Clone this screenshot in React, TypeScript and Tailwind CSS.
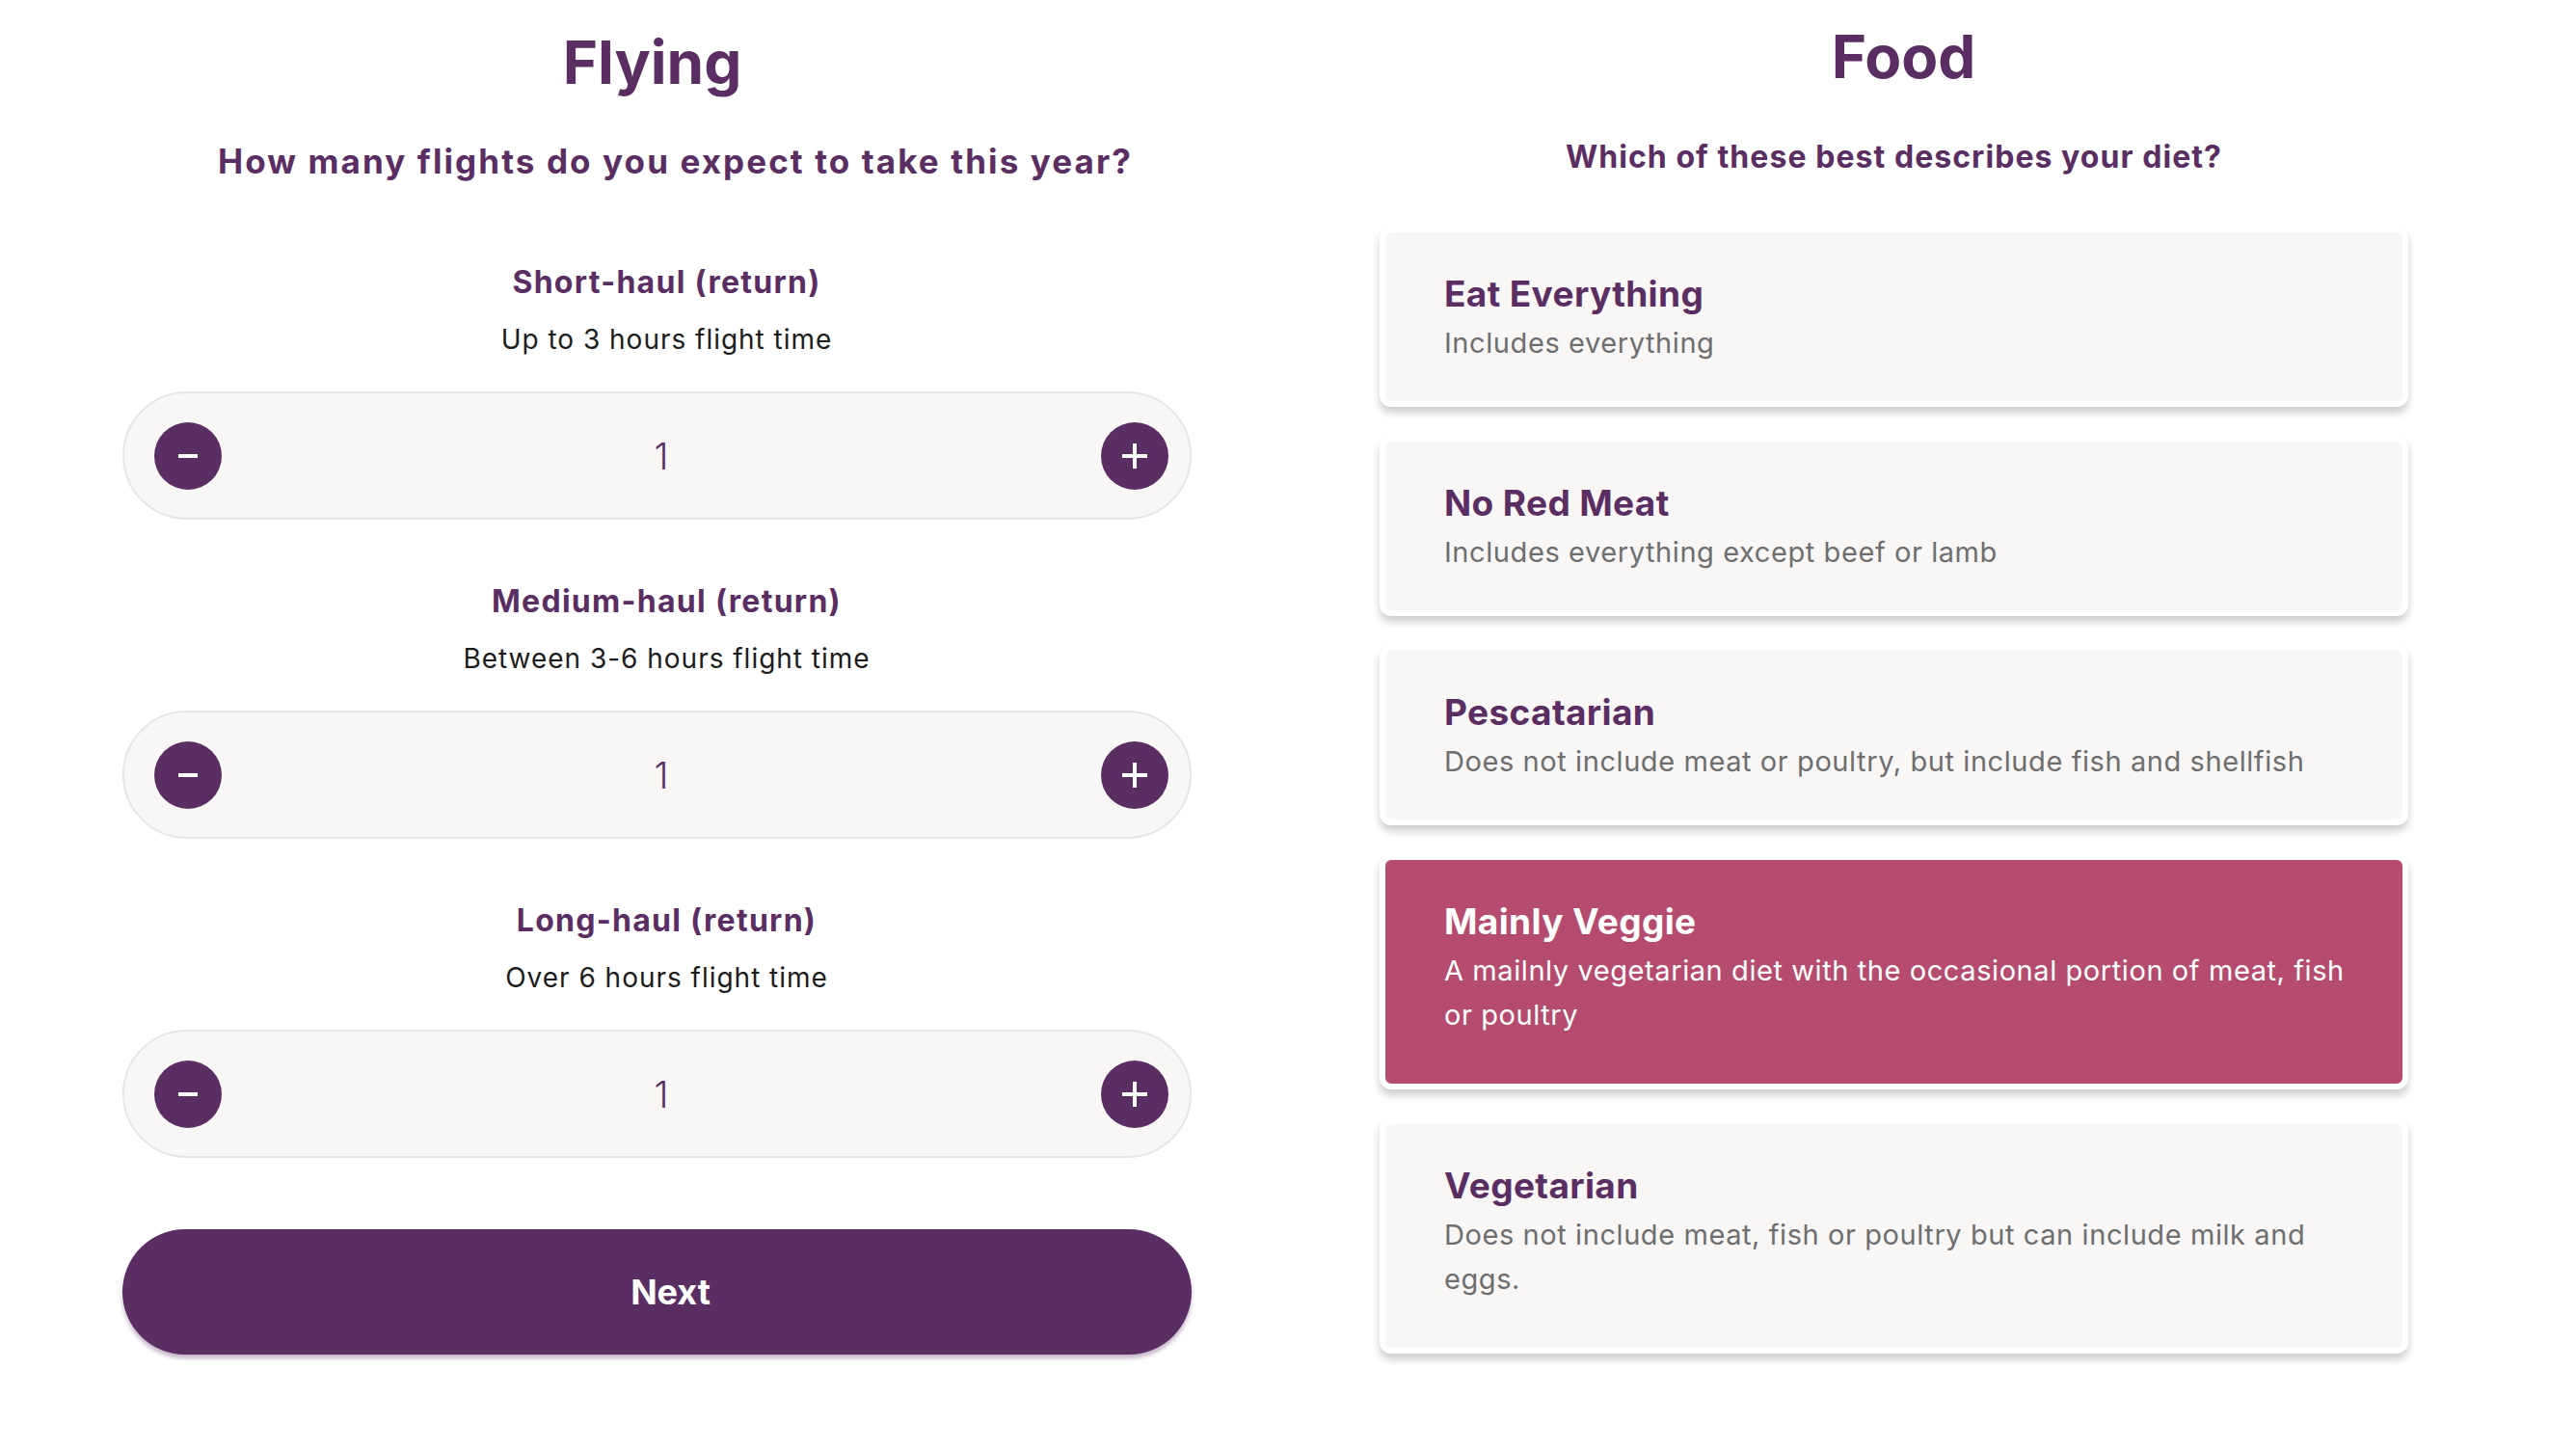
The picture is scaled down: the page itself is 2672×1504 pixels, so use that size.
import { useState } from "react";

type Flight = { label: string; hint: string };
type Diet = { title: string; text: string; wraps?: boolean };

const flights: Flight[] = [
  { label: "Short-haul (return)", hint: "Up to 3 hours flight time" },
  { label: "Medium-haul (return)", hint: "Between 3-6 hours flight time" },
  { label: "Long-haul (return)", hint: "Over 6 hours flight time" },
];

const diets: Diet[] = [
  { title: "Eat Everything", text: "Includes everything" },
  { title: "No Red Meat", text: "Includes everything except beef or lamb" },
  { title: "Pescatarian", text: "Does not include meat or poultry, but include fish and shellfish" },
  { title: "Mainly Veggie", text: "A mailnly vegetarian diet with the occasional portion of meat, fish or poultry", wraps: true },
  { title: "Vegetarian", text: "Does not include meat, fish or poultry but can include milk and eggs.", wraps: true },
];

function Counter({ value, onChange }: { value: number; onChange: (v: number) => void }) {
  return (
    <div className="flex h-[133px] w-full items-center justify-between rounded-full border-2 border-[#e7e6e6] bg-[#f8f7f6] pl-[31px] pr-[22px]">
      <button
        onClick={() => onChange(Math.max(0, value - 1))}
        className="flex h-[70px] w-[70px] items-center justify-center rounded-full bg-[#5a2e63]"
      >
        <svg width="20" height="4" viewBox="0 0 20 4">
          <rect width="20" height="4" fill="#fff" />
        </svg>
      </button>
      <span className="text-[38px] font-light leading-none text-[#5a2e63]">{value}</span>
      <button
        onClick={() => onChange(value + 1)}
        className="flex h-[70px] w-[70px] items-center justify-center rounded-full bg-[#5a2e63]"
      >
        <svg width="26" height="26" viewBox="0 0 26 26">
          <rect x="11" y="0" width="4" height="26" fill="#fff" />
          <rect x="0" y="11" width="26" height="4" fill="#fff" />
        </svg>
      </button>
    </div>
  );
}

export default function App() {
  const [counts, setCounts] = useState([1, 1, 1]);
  const [diet, setDiet] = useState(3);

  return (
    <div className="flex min-h-screen w-full gap-[195px] bg-white pl-[127px] font-[Inter,sans-serif] text-[#5a2e63]">
      {/* Flying */}
      <section className="flex w-[1109px] flex-col items-center pt-[29px]">
        <h1 className="pr-[10px] text-[62px] font-bold leading-[72px]">Flying</h1>
        <h2 className="mt-[46px] pl-[38px] text-[35px] font-bold leading-[40px] tracking-[0.06em]">
          How many flights do you expect to take this year?
        </h2>

        <div className="mt-[88px] flex w-full flex-col gap-[67px]">
          {flights.map((f, i) => (
            <div key={f.label} className="flex flex-col items-center">
              <h3 className="pl-[20px] text-[32px] font-bold leading-[36px] tracking-[0.04em]">{f.label}</h3>
              <p className="mt-[25px] pl-[20px] text-[28px] leading-[32px] tracking-[0.035em] text-[#1c1c1c]">{f.hint}</p>
              <div className="mt-[38px] w-full">
                <Counter
                  value={counts[i]}
                  onChange={(v) => setCounts(counts.map((c, j) => (j === i ? v : c)))}
                />
              </div>
            </div>
          ))}
        </div>

        <button className="mt-[74px] h-[130px] w-full rounded-full bg-[#5a2e63] pl-[28px] text-[36px] font-bold text-white shadow-[0_4px_4px_rgba(90,46,99,0.35)]">
          Next
        </button>
      </section>

      {/* Food */}
      <section className="flex w-[1067px] flex-col items-center pt-[23px]">
        <h1 className="pl-[20px] text-[62px] font-bold leading-[72px]">Food</h1>
        <h2 className="mt-[48px] text-[32px] font-bold leading-[40px] tracking-[0.033em]">
          Which of these best describes your diet?
        </h2>

        <div className="mt-[52px] flex w-full flex-col gap-[30px]">
          {diets.map((d, i) => {
            const active = i === diet;
            return (
              <button
                key={d.title}
                onClick={() => setDiet(i)}
                className={[
                  "rounded-[12px] border-[6px] border-white pl-[61px] pr-[30px] pt-[42px] text-left shadow-[0_6px_8px_rgba(0,0,0,0.2)]",
                  active ? "bg-[#b54c6f]" : "bg-[#f8f7f6]",
                  d.wraps ? "pb-[48px]" : "pb-[37px]",
                ].join(" ")}
              >
                <div className={active ? "text-[37px] font-bold leading-[44px] tracking-[0.01em] text-white" : "text-[37px] font-bold leading-[44px] tracking-[0.01em] text-[#5a2e63]"}>
                  {d.title}
                </div>
                <div className={active ? "mt-[6px] text-[29px] leading-[46px] tracking-[0.02em] text-white" : "mt-[6px] text-[29px] leading-[46px] tracking-[0.02em] text-[#6e6e6e]"}>
                  {d.text}
                </div>
              </button>
            );
          })}
        </div>
      </section>
    </div>
  );
}
